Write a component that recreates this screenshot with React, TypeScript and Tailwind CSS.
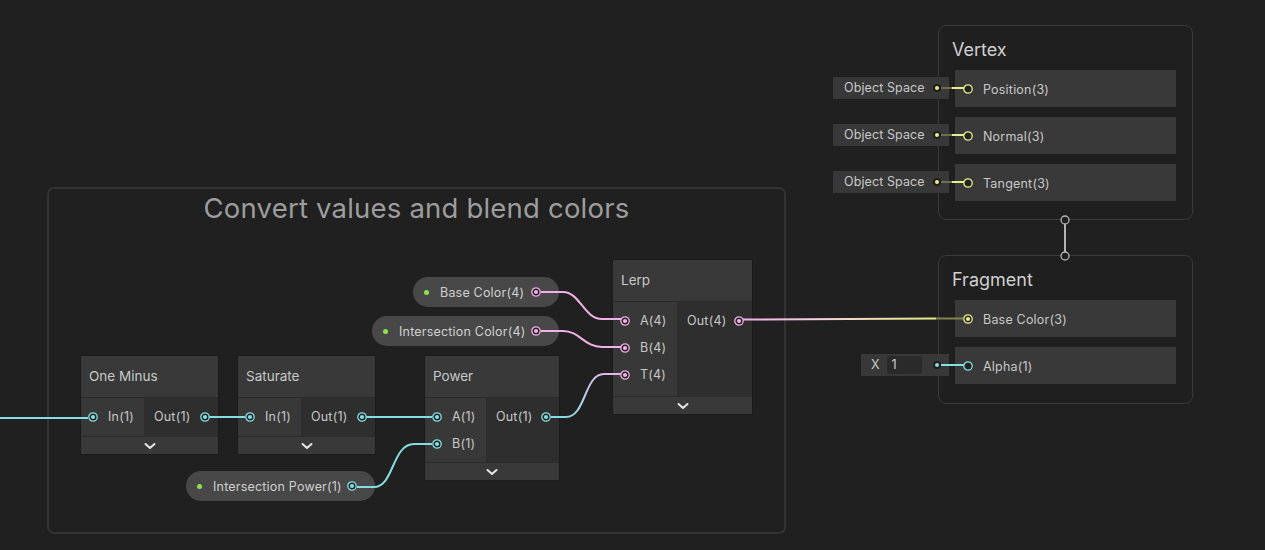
import React from "react"

const CYAN = "#84dfe4"
const PINK = "#f2b0e8"
const YELLOW = "#e8ef8a"

function Port({ color, hollow = false }: { color: string; hollow?: boolean }) {
  return (
    <svg width="10" height="10" viewBox="0 0 10 10" className="shrink-0">
      <circle cx="5" cy="5" r="4.2" fill="#232323" stroke={color} strokeWidth="1.3" />
      {!hollow && <circle cx="5" cy="5" r="2.1" fill={color} />}
    </svg>
  )
}

function Chevron() {
  return (
    <svg width="12" height="8" viewBox="0 0 12 8">
      <polyline points="1.5,2 6,6 10.5,2" fill="none" stroke="#e6e6e6" strokeWidth="2" strokeLinecap="round" strokeLinejoin="round" />
    </svg>
  )
}

type NodeProps = {
  pos: string
  title: string
  inputs: string[]
  output: string
  inW: string
  slotsH: string
  color: string
}

// one shader graph node: header, slot columns, collapse bar
function GraphNode({ pos, title, inputs, output, inW, slotsH, color }: NodeProps) {
  return (
    <div className={`absolute ${pos} flex flex-col border border-[#1b1b1b] bg-[#2e2e2e]`}>
      <div className="h-[42px] bg-[#393939] border-b border-[#2b2b2b] flex items-center px-[8px] text-[13.5px] text-[#c8c8c8]">
        {title}
      </div>
      <div className={`flex ${slotsH}`}>
        <div className={`${inW} bg-[#383838] pt-[5px] flex flex-col`}>
          {inputs.map((label) => (
            <div key={label} className="h-[27px] flex items-center pl-[7px]">
              <Port color={color} />
              <span className="ml-[10px] pt-[2px] text-[12.5px] tracking-[0.2px] text-[#c8c8c8]">{label}</span>
            </div>
          ))}
        </div>
        <div className="flex-1 bg-[#2e2e2e] pt-[5px]">
          <div className="h-[27px] flex items-center justify-between pl-[10px] pr-[8px]">
            <span className="pt-[2px] text-[12.5px] tracking-[0.2px] text-[#c8c8c8]">{output}</span>
            <Port color={color} />
          </div>
        </div>
      </div>
      <div className="h-[18px] bg-[#393939] border-t border-[#2b2b2b] flex items-center justify-center">
        <Chevron />
      </div>
    </div>
  )
}

function Pill({ pos, label, color }: { pos: string; label: string; color: string }) {
  return (
    <div className={`absolute ${pos} h-[30px] rounded-full bg-[#484848] flex items-center pl-[11px] pr-[18px]`}>
      <div className="w-[5px] h-[5px] rounded-full bg-[#8ee24f] shrink-0" />
      <span className="ml-[11px] pt-[2px] flex-1 text-[12.5px] tracking-[0.2px] text-[#cfcfcf] whitespace-nowrap">{label}</span>
      <Port color={color} />
    </div>
  )
}

function BlockSlot({ label, color, filled = false }: { label: string; color: string; filled?: boolean }) {
  return (
    <div className="h-[37px] bg-[#393939] flex items-center pl-[8px]">
      <Port color={color} hollow={!filled} />
      <span className="ml-[10px] pt-[3px] text-[12.5px] tracking-[0.2px] text-[#c8c8c8]">{label}</span>
    </div>
  )
}

function SpaceBox({ pos }: { pos: string }) {
  return (
    <div className={`absolute ${pos} w-[116px] h-[22px] bg-[#383838] flex items-center justify-between pl-[11px] pr-[8px]`}>
      <span className="text-[12.5px] tracking-[0.1px] text-[#c8c8c8]">Object Space</span>
      <div className="w-[8px] h-[8px] rounded-full bg-[#1e1e1e] flex items-center justify-center">
        <div className="w-[4px] h-[4px] rounded-full bg-[#e8ef8a]" />
      </div>
    </div>
  )
}

export default function App() {
  return (
    <div className="relative w-[1265px] h-[550px] overflow-hidden bg-[#202020] font-['Inter','Noto_Sans',sans-serif]">
      {/* group */}
      <div className="absolute left-[47px] top-[187px] w-[739px] h-[347px] rounded-[7px] border-2 border-[#333333] flex justify-center">
        <div className="-mt-[1px] text-[27.5px] text-[#9d9d9d] tracking-[0.2px]">Convert values and blend colors</div>
      </div>

      <GraphNode pos="left-[80px] top-[355px] w-[139px]" title="One Minus" inputs={["In(1)"]} output="Out(1)" inW="w-[63px]" slotsH="h-[38px]" color={CYAN} />
      <GraphNode pos="left-[237px] top-[355px] w-[139px]" title="Saturate" inputs={["In(1)"]} output="Out(1)" inW="w-[63px]" slotsH="h-[38px]" color={CYAN} />
      <GraphNode pos="left-[424px] top-[355px] w-[136px]" title="Power" inputs={["A(1)", "B(1)"]} output="Out(1)" inW="w-[61px]" slotsH="h-[64px]" color={CYAN} />
      <GraphNode pos="left-[612px] top-[259px] w-[141px]" title="Lerp" inputs={["A(4)", "B(4)", "T(4)"]} output="Out(4)" inW="w-[64px]" slotsH="h-[94px]" color={PINK} />

      <Pill pos="left-[413px] top-[277px] w-[146px]" label="Base Color(4)" color={PINK} />
      <Pill pos="left-[372px] top-[316px] w-[187px]" label="Intersection Color(4)" color={PINK} />
      <Pill pos="left-[186px] top-[471px] w-[189px]" label="Intersection Power(1)" color={CYAN} />

      {/* vertex block */}
      <div className="absolute left-[938px] top-[25px] w-[255px] h-[195px] rounded-[8px] border border-[#3a3a3a] bg-[#1f1f1f] px-[16px]">
        <div className="h-[44px] pt-[10px] text-[18px] text-[#d0d0d0] -ml-[3px]">Vertex</div>
        <div className="flex flex-col gap-[10px]">
          <BlockSlot label="Position(3)" color={YELLOW} />
          <BlockSlot label="Normal(3)" color={YELLOW} />
          <BlockSlot label="Tangent(3)" color={YELLOW} />
        </div>
      </div>

      {/* fragment block */}
      <div className="absolute left-[938px] top-[255px] w-[255px] h-[149px] rounded-[8px] border border-[#3a3a3a] bg-[#1f1f1f] px-[16px]">
        <div className="h-[44px] pt-[10px] text-[18px] text-[#d0d0d0] -ml-[3px]">Fragment</div>
        <div className="flex flex-col gap-[10px]">
          <BlockSlot label="Base Color(3)" color={YELLOW} filled />
          <BlockSlot label="Alpha(1)" color={CYAN} />
        </div>
      </div>

      <SpaceBox pos="left-[833px] top-[77px]" />
      <SpaceBox pos="left-[833px] top-[124px]" />
      <SpaceBox pos="left-[833px] top-[171px]" />

      {/* alpha value field */}
      <div className="absolute left-[861px] top-[354px] w-[88px] h-[22px] bg-[#383838] flex items-center pl-[10px] pr-[8px]">
        <span className="text-[12.5px] text-[#c8c8c8]">X</span>
        <div className="ml-[7px] w-[35px] h-[18px] rounded-[3px] bg-[#2a2a2a] flex items-center pl-[5px] text-[12.5px] text-[#d0d0d0]">1</div>
        <div className="ml-auto w-[8px] h-[8px] rounded-full bg-[#1e1e1e] flex items-center justify-center">
          <div className="w-[4px] h-[4px] rounded-full bg-[#84dfe4]" />
        </div>
      </div>

      {/* wires */}
      <svg className="absolute inset-0 pointer-events-none" width="1265" height="550" viewBox="0 0 1265 550">
        <defs>
          <linearGradient id="tWire" gradientUnits="userSpaceOnUse" x1="560" y1="417" x2="610" y2="374">
            <stop offset="0" stopColor={CYAN} />
            <stop offset="1" stopColor="#e8b4ec" />
          </linearGradient>
          <linearGradient id="outWire" gradientUnits="userSpaceOnUse" x1="745" y1="0" x2="936" y2="0">
            <stop offset="0" stopColor={PINK} />
            <stop offset="0.4" stopColor="#f6d2dc" />
            <stop offset="1" stopColor="#e2ec82" />
          </linearGradient>
        </defs>
        <g fill="none" strokeWidth="2">
          <path d="M0 418 L88 418" stroke={CYAN} />
          <path d="M209 417 L245 417" stroke={CYAN} />
          <path d="M366 417 L432 417" stroke={CYAN} />
          <path d="M551 417 L566 417 C586 417, 584 374, 604 374 L621 374" stroke="url(#tWire)" />
          <path d="M357 487 L374 487 C394 487, 392 444, 414 444 L432 444" stroke={CYAN} />
          <path d="M541 292 L563 292 C580 292, 584 319, 602 319 L621 319" stroke={PINK} />
          <path d="M541 331 L563 331 C580 331, 584 347, 602 347 L621 347" stroke={PINK} />
          <path d="M743 319.5 L936 318.5" stroke="url(#outWire)" />
          <path d="M936 318.5 L963 318.5" stroke="#80844e" />
          <path d="M941 88 L952 88" stroke="#6d6f4c" />
          <path d="M952 88 L964 88" stroke={YELLOW} />
          <path d="M941 135 L952 135" stroke="#6d6f4c" />
          <path d="M952 135 L964 135" stroke={YELLOW} />
          <path d="M941 182 L952 182" stroke="#6d6f4c" />
          <path d="M952 182 L964 182" stroke={YELLOW} />
          <path d="M941 365 L964 365" stroke={CYAN} />
          <path d="M1065 224 L1065 252" stroke="#b4b4b4" />
          <circle cx="1065" cy="220" r="4" fill="#202020" stroke="#b4b4b4" strokeWidth="1.3" />
          <circle cx="1065" cy="256" r="4" fill="#202020" stroke="#b4b4b4" strokeWidth="1.3" />
        </g>
      </svg>
    </div>
  )
}
